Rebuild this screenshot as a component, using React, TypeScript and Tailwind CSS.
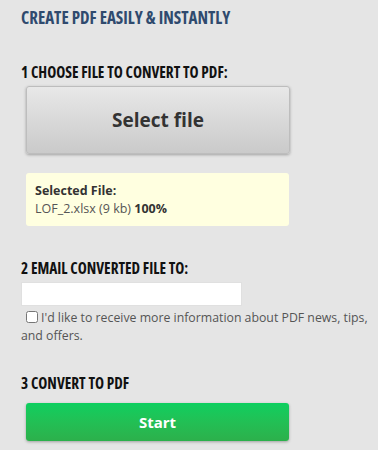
export default function App() {
  return (
    <div className="min-h-[450px] w-full bg-[#e5e5e5] pl-[21px] pr-[4px] pt-[8px] font-['Open_Sans','Liberation_Sans',sans-serif] text-[#333]">
      <h1 className="font-stretch-condensed text-[17px] font-bold leading-[20px] text-[#2f4a6e]">
        CREATE PDF EASILY &amp; INSTANTLY
      </h1>

      {/* step 1 */}
      <h2 className="mt-[34px] font-stretch-condensed text-[15.3px] font-bold leading-[20px] text-[#111]">
        1 CHOOSE FILE TO CONVERT TO PDF:
      </h2>
      <button className="mt-[4px] ml-[5px] flex h-[68px] w-[264px] items-center justify-center rounded-[3px] border border-[#bdbdbd] bg-gradient-to-b from-[#e8e8e8] to-[#cacaca] text-[19px] font-bold text-[#333] shadow-[0_1px_3px_rgba(0,0,0,0.3)]">
        Select file
      </button>

      <div className="mt-[19px] ml-[5px] w-[263px] rounded-[3px] bg-[#ffffe0] px-[9px] pt-[9px] pb-[8px] text-[12.5px] leading-[18px]">
        <p className="font-bold text-[#333]">Selected File:</p>
        <p className="text-[#555]">
          LOF_2.xlsx (9 kb) <span className="font-bold text-[#333]">100%</span>
        </p>
      </div>

      {/* step 2 */}
      <h2 className="mt-[32px] font-stretch-condensed text-[15.3px] font-bold leading-[20px] text-[#111]">
        2 EMAIL CONVERTED FILE TO:
      </h2>
      <input
        type="text"
        className="mt-[4px] block h-[24px] w-[221px] border border-[#e0e0e0] bg-white outline-none"
      />
      <label className="mt-[3px] block text-[12.3px] leading-[18px] text-[#555]">
        <input
          type="checkbox"
          className="mr-[3px] ml-[5px] inline-block h-[12px] w-[12px] align-[-1px]"
        />
        I'd like to receive more information about PDF news, tips, and offers.
      </label>

      {/* step 3 */}
      <h2 className="mt-[28px] font-stretch-condensed text-[15.3px] font-bold leading-[20px] text-[#111]">
        3 CONVERT TO PDF
      </h2>
      <button className="mt-[10px] ml-[5px] flex h-[38px] w-[263px] items-center justify-center rounded-[3px] bg-gradient-to-b from-[#0ccf5f] to-[#2cb04b] text-[15px] font-bold text-white shadow-[0_1px_3px_rgba(0,0,0,0.3)]">
        Start
      </button>
    </div>
  );
}
